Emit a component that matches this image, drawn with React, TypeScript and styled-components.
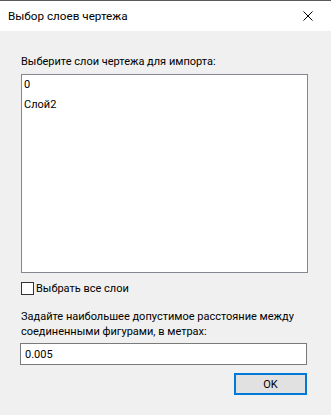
import styled, { createGlobalStyle } from "styled-components";

const GlobalStyle = createGlobalStyle`
  html, body {
    margin: 0;
    padding: 0;
    background: #f0f0f0;
  }
  * {
    box-sizing: border-box;
  }
`;

const Window = styled.div`
  width: 331px;
  height: 415px;
  display: flex;
  flex-direction: column;
  background: #f0f0f0;
  border-top: 1px solid #5a5a5a;
  font-family: Roboto, "Liberation Sans", sans-serif;
  font-size: 11px;
  color: #000;
`;

const TitleBar = styled.div`
  height: 30px;
  background: #fff;
  display: flex;
  align-items: center;
  justify-content: space-between;
  padding-left: 8px;
`;

const Title = styled.span`
  font-size: 11.7px;
  line-height: 16px;
`;

const CloseBtn = styled.div`
  width: 46px;
  height: 30px;
  display: flex;
  align-items: center;
  justify-content: center;
`;

const Content = styled.div`
  flex: 1;
  display: flex;
  flex-direction: column;
  padding: 23px 23px 0 21px;
`;

const Label = styled.div`
  line-height: 16px;
`;

const ListBox = styled.div`
  margin-top: 4px;
  height: 199px;
  background: #fff;
  border: 1px solid #828790;
  padding: 0 2px;
`;

const ListItem = styled.div`
  line-height: 20px;
`;

const CheckRow = styled.label`
  margin-top: 9px;
  display: flex;
  align-items: center;
  gap: 2px;
  height: 13px;
`;

const Box = styled.span`
  width: 13px;
  height: 13px;
  border: 1px solid #333;
  background: #fff;
`;

const Hint = styled.div`
  margin-top: 14px;
  line-height: 15px;
  white-space: nowrap;
`;

const Field = styled.div`
  margin-top: 4px;
  height: 22px;
  margin-right: 1px;
  margin-left: -1px;
  background: #fff;
  border: 1px solid #7a7a7a;
  padding: 0 4px;
  display: flex;
  align-items: center;
`;

const Footer = styled.div`
  margin-top: 8px;
  display: flex;
  justify-content: flex-end;
  padding-right: 1px;
`;

const Button = styled.div`
  width: 73px;
  height: 22px;
  background: #e1e1e1;
  border: 2px solid #0078d7;
  display: flex;
  align-items: center;
  justify-content: center;
`;

export default function App() {
  return (
    <>
      <GlobalStyle />
      <Window>
        <TitleBar>
          <Title>Выбор слоев чертежа</Title>
          <CloseBtn>
            <svg width="10" height="10" viewBox="0 0 10 10">
              <path d="M0.5 0.5 L9.5 9.5 M9.5 0.5 L0.5 9.5" stroke="#000" strokeWidth="1" />
            </svg>
          </CloseBtn>
        </TitleBar>
        <Content>
          <Label>Выберите слои чертежа для импорта:</Label>
          <ListBox>
            <ListItem>0</ListItem>
            <ListItem>Слой2</ListItem>
          </ListBox>
          <CheckRow>
            <Box />
            <span>Выбрать все слои</span>
          </CheckRow>
          <Hint>
            Задайте наибольшее допустимое расстояние между
            <br />
            соединенными фигурами, в метрах:
          </Hint>
          <Field>0.005</Field>
          <Footer>
            <Button>OK</Button>
          </Footer>
        </Content>
      </Window>
    </>
  );
}
